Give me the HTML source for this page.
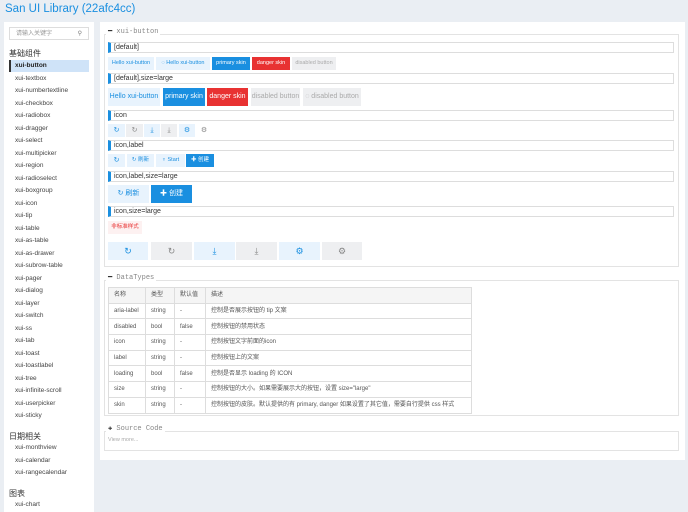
<!DOCTYPE html>
<html><head><meta charset="utf-8"><style>
*{box-sizing:border-box;margin:0;padding:0}
body{width:688px;height:512px;overflow:hidden;background:#eaeef3;font-family:"Liberation Sans","Noto Sans CJK SC",sans-serif;position:relative;color:#333}
.a{position:absolute}
.title{left:5px;top:3px;font-size:11.5px;color:#1a8fe0}
.side{left:4px;top:22px;width:90px;height:490px;background:#fff}
.search{left:9px;top:27px;width:80px;height:13px;border:1px solid #ddd;font-size:6px;color:#999;padding:2px 6px;line-height:8px}
.grp{left:9px;font-size:8px;color:#333}
.it{left:15px;font-size:6.5px;color:#444}
.sel{left:9px;top:60px;width:80px;height:12px;background:#cfe3f8;border-left:2px solid #333}
.main{left:100px;top:22px;width:585px;height:438px;background:#fff}
.fs{border:1px solid #e3e3e3}
.lg{font-family:"Liberation Mono",monospace;font-size:7px;color:#888;background:#fff;padding:0 2px}
.hd{left:108px;width:566px;height:11px;border:1px solid #ddd;border-left:3px solid #1a8fe0;font-size:7px;padding-left:3px;line-height:9px}
.b{position:absolute;height:13px;font-size:5.5px;line-height:13px;text-align:center;background:#e8f3fd;color:#1a8fe0}
.p{background:#1a8fe0;color:#fff}
.d{background:#e83232;color:#fff}
.g{background:#eeeff1;color:#aaa}
.L{height:18px;line-height:18px;font-size:7px}
table{border-collapse:collapse;font-size:6px;color:#555}
td{border:1px solid #ddd;height:15.7px;padding:0 5px;vertical-align:middle;line-height:8px}
tr:first-child td{background:#f5f5f5}
</style></head><body>
<div class="a title">San UI Library (22afc4cc)</div>
<div class="a side"></div>
<div class="a search">请输入关键字<span style="float:right;color:#777">⚲</span></div>
<div class="a grp" style="top:48px">基础组件</div>
<div class="a sel"></div>
<div class="a it" style="top:62px;font-weight:bold;color:#222">xui-button</div>
<div class="a it" style="top:74.5px">xui-textbox</div>
<div class="a it" style="top:87px">xui-numbertextline</div>
<div class="a it" style="top:99.5px">xui-checkbox</div>
<div class="a it" style="top:112px">xui-radiobox</div>
<div class="a it" style="top:124.5px">xui-dragger</div>
<div class="a it" style="top:137px">xui-select</div>
<div class="a it" style="top:149.5px">xui-multipicker</div>
<div class="a it" style="top:162px">xui-region</div>
<div class="a it" style="top:174.5px">xui-radioselect</div>
<div class="a it" style="top:187px">xui-boxgroup</div>
<div class="a it" style="top:199.5px">xui-icon</div>
<div class="a it" style="top:212px">xui-tip</div>
<div class="a it" style="top:224.5px">xui-table</div>
<div class="a it" style="top:237px">xui-as-table</div>
<div class="a it" style="top:249.5px">xui-as-drawer</div>
<div class="a it" style="top:262px">xui-subrow-table</div>
<div class="a it" style="top:274.5px">xui-pager</div>
<div class="a it" style="top:287px">xui-dialog</div>
<div class="a it" style="top:299.5px">xui-layer</div>
<div class="a it" style="top:312px">xui-switch</div>
<div class="a it" style="top:324.5px">xui-ss</div>
<div class="a it" style="top:337px">xui-tab</div>
<div class="a it" style="top:349.5px">xui-toast</div>
<div class="a it" style="top:362px">xui-toastlabel</div>
<div class="a it" style="top:374.5px">xui-tree</div>
<div class="a it" style="top:387px">xui-infinite-scroll</div>
<div class="a it" style="top:399.5px">xui-userpicker</div>
<div class="a it" style="top:412px">xui-sticky</div>
<div class="a grp" style="top:431px">日期相关</div>
<div class="a it" style="top:444px">xui-monthview</div>
<div class="a it" style="top:456.5px">xui-calendar</div>
<div class="a it" style="top:469px">xui-rangecalendar</div>
<div class="a grp" style="top:488px">图表</div>
<div class="a it" style="top:501px">xui-chart</div>

<div class="a main"></div>
<div class="a fs" style="left:104px;top:34px;width:575px;height:233px"></div>
<div class="a lg" style="left:106px;top:27px"><b style="color:#333">━</b> xui-button</div>

<div class="a hd" style="top:42px">[default]</div>
<div class="b" style="left:108px;top:57px;width:46px">Hello xui-button</div>
<div class="b" style="left:156px;top:57px;width:54px">◌ Hello xui-button</div>
<div class="b p" style="left:212px;top:57px;width:38px">primary skin</div>
<div class="b d" style="left:252px;top:57px;width:38px">danger skin</div>
<div class="b g" style="left:292px;top:57px;width:44px">disabled button</div>

<div class="a hd" style="top:73px">[default],size=large</div>
<div class="b L" style="left:108px;top:88px;width:52px">Hello xui-button</div>
<div class="b p L" style="left:163px;top:88px;width:42px">primary skin</div>
<div class="b d L" style="left:207px;top:88px;width:41px">danger skin</div>
<div class="b g L" style="left:251px;top:88px;width:49px">disabled button</div>
<div class="b g L" style="left:303px;top:88px;width:58px">◌ disabled button</div>

<div class="a hd" style="top:110px">icon</div>
<div class="b" style="left:108px;top:124px;width:17px;font-size:7px">↻</div>
<div class="b g" style="left:126px;top:124px;width:17px;font-size:7px;color:#888">↻</div>
<div class="b" style="left:144px;top:124px;width:16px;font-size:7px">⤓</div>
<div class="b g" style="left:161px;top:124px;width:16px;font-size:7px;color:#888">⤓</div>
<div class="b" style="left:179px;top:124px;width:16px;font-size:7px">⚙</div>
<div class="b g" style="left:196px;top:124px;width:16px;font-size:7px;color:#888;background:#fff">⚙</div>

<div class="a hd" style="top:140px">icon,label</div>
<div class="b" style="left:108px;top:154px;width:17px;font-size:7px">↻</div>
<div class="b" style="left:127px;top:154px;width:27px">↻ 刷新</div>
<div class="b" style="left:156px;top:154px;width:29px">♆ Start</div>
<div class="b p" style="left:186px;top:154px;width:28px">✚ 创建</div>

<div class="a hd" style="top:171px">icon,label,size=large</div>
<div class="b L" style="left:108px;top:185px;width:41px">↻ 刷新</div>
<div class="b p L" style="left:151px;top:185px;width:41px">✚ 创建</div>

<div class="a hd" style="top:206px">icon,size=large</div>
<div class="b" style="left:108px;top:221px;width:34px;background:#fdf1f1;color:#e83232">非标准样式</div>
<div class="b L" style="left:108px;top:242px;width:40px;font-size:9px">↻</div>
<div class="b g L" style="left:151px;top:242px;width:41px;font-size:9px;color:#888">↻</div>
<div class="b L" style="left:194px;top:242px;width:41px;font-size:9px">⤓</div>
<div class="b g L" style="left:236px;top:242px;width:41px;font-size:9px;color:#888">⤓</div>
<div class="b L" style="left:279px;top:242px;width:41px;font-size:9px">⚙</div>
<div class="b g L" style="left:322px;top:242px;width:40px;font-size:9px;color:#888">⚙</div>

<div class="a fs" style="left:104px;top:280px;width:575px;height:136px"></div>
<div class="a lg" style="left:106px;top:273px"><b style="color:#333">━</b> DataTypes</div>
<table class="a" style="left:108px;top:287px;width:364px">
<tr><td style="width:37px">名称</td><td style="width:29px">类型</td><td style="width:31px">默认值</td><td>描述</td></tr>
<tr><td>aria-label</td><td>string</td><td>-</td><td>控制是否展示按钮的 tip 文案</td></tr>
<tr><td>disabled</td><td>bool</td><td>false</td><td>控制按钮的禁用状态</td></tr>
<tr><td>icon</td><td>string</td><td>-</td><td>控制按钮文字前面的icon</td></tr>
<tr><td>label</td><td>string</td><td>-</td><td>控制按钮上的文案</td></tr>
<tr><td>loading</td><td>bool</td><td>false</td><td>控制是否显示 loading 的 ICON</td></tr>
<tr><td>size</td><td>string</td><td>-</td><td>控制按钮的大小。如果需要展示大的按钮，设置 size="large"</td></tr>
<tr><td>skin</td><td>string</td><td>-</td><td style="white-space:nowrap">控制按钮的皮肤。默认提供的有 primary, danger 如果设置了其它值，需要自行提供 css 样式</td></tr>
</table>

<div class="a fs" style="left:104px;top:431px;width:575px;height:20px"></div>
<div class="a lg" style="left:106px;top:424px"><b style="color:#333">✚</b> Source Code</div>
<div class="a" style="left:108px;top:437px;font-size:5.5px;color:#aaa">View more...</div>
</body></html>
